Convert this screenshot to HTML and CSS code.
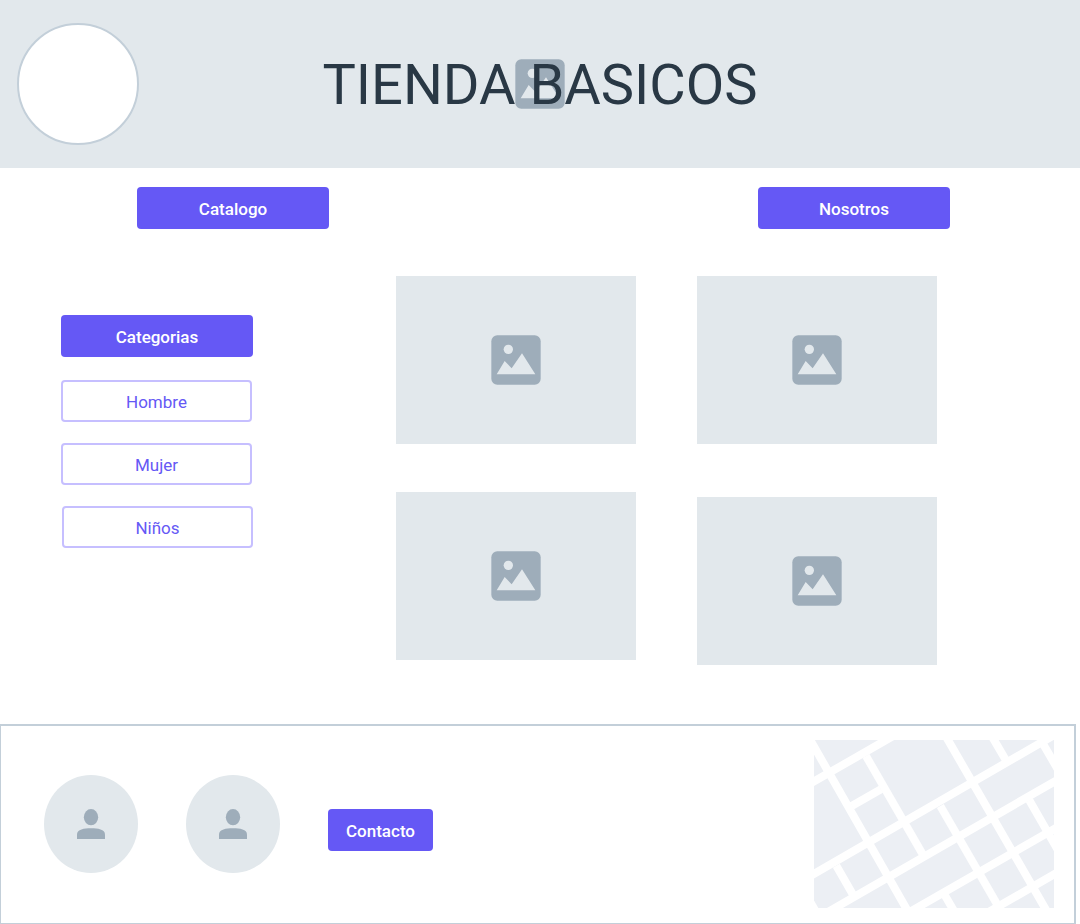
FILE: index.html
```html
<!DOCTYPE html>
<html lang="es">
<head>
<meta charset="utf-8">
<meta name="viewport" content="width=device-width, initial-scale=1">
<title>Tienda Basicos</title>
<link rel="stylesheet" href="styles.css">
</head>
<body>
<svg class="sprite" aria-hidden="true">
  <symbol id="picture" viewBox="0 0 150 150">
    <rect class="ink" x="1" y="1" width="148" height="148" rx="18"/>
    <circle class="paper" cx="52" cy="43" r="14"/>
    <path class="paper" d="M17 118 41 78 62 100 93 55 133 118Z"/>
  </symbol>
  <symbol id="person" viewBox="0 0 86 92">
    <ellipse class="ink" cx="43" cy="25" rx="22" ry="25"/>
    <path class="ink" d="M0 92V78C0 62 22 59 43 59S86 62 86 78V92Z"/>
  </symbol>
</svg>

<header class="banner">
  <div class="logo"></div>
  <svg class="picture banner-picture" aria-hidden="true"><use href="#picture"/></svg>
  <h1 class="title">TIENDA BASICOS</h1>
</header>

<nav class="main-nav">
  <button class="button wide" type="button">Catalogo</button>
  <button class="button wide" type="button">Nosotros</button>
</nav>

<main class="content">
  <aside class="categories">
    <button class="button heading" type="button">Categorias</button>
    <button class="button outline" type="button">Hombre</button>
    <button class="button outline" type="button">Mujer</button>
    <button class="button outline end" type="button">Niños</button>
  </aside>
  <section class="gallery">
    <div class="column">
      <div class="card"><svg class="picture" aria-hidden="true"><use href="#picture"/></svg></div>
      <div class="card"><svg class="picture" aria-hidden="true"><use href="#picture"/></svg></div>
    </div>
    <div class="column loose">
      <div class="card"><svg class="picture" aria-hidden="true"><use href="#picture"/></svg></div>
      <div class="card"><svg class="picture" aria-hidden="true"><use href="#picture"/></svg></div>
    </div>
  </section>
</main>

<footer class="footer">
  <div class="contact">
    <div class="avatar"><svg class="person" aria-hidden="true"><use href="#person"/></svg></div>
    <div class="avatar"><svg class="person" aria-hidden="true"><use href="#person"/></svg></div>
    <button class="button contact-button" type="button">Contacto</button>
  </div>
  <svg class="map" viewBox="42 45 720 504" role="img" aria-label="Mapa">
    <rect class="land" x="42" y="45" width="720" height="504"/>
    <g class="roads">
      <path d="M20 182 290 27"/>
      <path d="M20 459 780 20"/>
      <path d="M70 569 780 160"/>
      <path d="M315 569 780 302"/>
      <path d="M552 569 780 438"/>
      <path d="M20 26 330 570"/>
      <path d="M198 93 368 388"/>
      <path d="M433 26 747 570"/>
      <path d="M571 26 616 103"/>
      <path d="M728 55 780 144"/>
      <path d="M421 243 600 553"/>
      <path d="M688 226 780 386"/>
      <path d="M109 422 159 509"/>
      <path d="M434 510 469 570"/>
      <path d="M155 243 243 193"/>
      <path d="M22 516 54 571"/>
    </g>
  </svg>
</footer>
</body>
</html>
```

FILE: styles.css
```css
* {
  box-sizing: border-box;
}

body {
  margin: 0;
  background: #fff;
  color: #293845;
  font-family: Roboto, "Liberation Sans", sans-serif;
}

.sprite {
  position: absolute;
  width: 0;
  height: 0;
}

.ink {
  fill: #9eadba;
}

.paper {
  fill: #e2e8ec;
}

.banner {
  position: relative;
  display: flex;
  align-items: center;
  justify-content: center;
  min-height: 168px;
  background: #e2e8ec;
}

.logo {
  position: absolute;
  left: 17px;
  top: 23px;
  width: 122px;
  height: 122px;
  border: 2px solid #c3cfd9;
  border-radius: 50%;
  background: #fff;
}

.picture {
  display: block;
  width: 50px;
  height: 50px;
}

.banner-picture {
  position: absolute;
  left: 50%;
  top: 50%;
  transform: translate(-50%, -50%);
}

.title {
  position: relative;
  margin: 0;
  padding-top: 2px;
  font-size: 56px;
  font-weight: 400;
  line-height: 66px;
}

.main-nav {
  display: flex;
  justify-content: space-between;
  padding: 19px 130px 0 137px;
}

.button {
  height: 42px;
  padding: 2px 18px 0;
  border: 0;
  border-radius: 4px;
  background: #6558f5;
  color: #fff;
  font: 500 17px/24px Roboto, "Liberation Sans", sans-serif;
  cursor: pointer;
}

.wide {
  width: 192px;
}

.content {
  display: flex;
  align-items: flex-start;
  gap: 143px;
  padding: 47px 143px 59px 61px;
}

.categories {
  display: flex;
  flex-direction: column;
  gap: 21px;
  width: 192px;
  padding-top: 39px;
}

.heading {
  margin-bottom: 2px;
}

.outline {
  width: 191px;
  border: 2px solid #c6bfff;
  background: #fff;
  color: #6558f5;
  font-weight: 400;
}

.end {
  align-self: flex-end;
}

.gallery {
  display: flex;
  flex: 1;
  gap: 61px;
}

.column {
  display: flex;
  flex: 1;
  flex-direction: column;
  gap: 48px;
}

.loose {
  gap: 53px;
}

.card {
  display: flex;
  align-items: center;
  justify-content: center;
  aspect-ratio: 10 / 7;
  background: #e2e8ec;
}

.footer {
  display: flex;
  align-items: center;
  justify-content: space-between;
  margin-right: 4px;
  padding: 14px 20px 15px 43px;
  border: solid #c3cfd9;
  border-width: 2px 2px 1px 1px;
}

.contact {
  display: flex;
  align-items: center;
  gap: 48px;
}

.avatar {
  display: flex;
  align-items: center;
  justify-content: center;
  width: 94px;
  height: 98px;
  border-radius: 50%;
  background: #e2e8ec;
}

.person {
  width: 28px;
  height: 30px;
}

.contact-button {
  margin-top: 12px;
}

.map {
  display: block;
  width: 240px;
  height: 168px;
}

.land {
  fill: #eceff4;
}

.roads {
  fill: none;
  stroke: #fff;
  stroke-width: 24;
}
```
